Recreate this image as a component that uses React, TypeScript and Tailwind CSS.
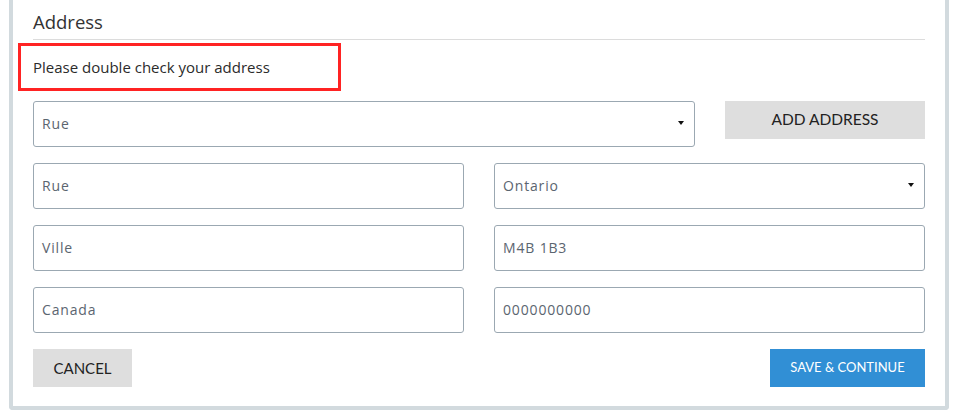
const fieldText = "text-[14px] tracking-[0.06em] text-[#5b6570]";

function Caret() {
  return (
    <svg width="6" height="4" viewBox="0 0 6 4" className="shrink-0">
      <path d="M0 0h6L3 4z" fill="#111" />
    </svg>
  );
}

function Field({ value, select }: { value: string; select?: boolean }) {
  return (
    <div className="h-[46px] flex items-center justify-between rounded-[3px] border border-[#9ba8b2] bg-white pl-2 pr-[10px] pb-[2px]">
      <span className={fieldText} style={{ fontFamily: '"Open Sans", sans-serif' }}>
        {value}
      </span>
      {select && <Caret />}
    </div>
  );
}

function App() {
  return (
    <main className="min-h-screen bg-white pl-[9px] pr-[19px]" style={{ fontFamily: "Lato, sans-serif" }}>
      <div className="border-x-4 border-b-4 border-[#d2dade] rounded-b-[4px] px-5 pb-[19px]">
        <div className="h-10 flex items-center border-b border-[#dcdcdc] pt-[5px]">
          <h2 className="text-[18.5px] text-[#333]" style={{ fontFamily: '"Open Sans", sans-serif' }}>
            Address
          </h2>
        </div>

        <div className="mt-[3px] -ml-[15px] w-[323px] h-[48px] border-[3px] border-[#ff2323] flex items-center pl-3">
          <p className="text-[15px] text-[#2b2b2b]" style={{ fontFamily: '"Open Sans", sans-serif' }}>
            Please double check your address
          </p>
        </div>

        <div className="mt-[10px] flex flex-col gap-4">
          <div className="flex gap-[30px] items-start">
            <div className="flex-1">
              <Field value="Rue" select />
            </div>
            <button className="w-[200px] h-[38px] bg-[#dedede] text-[15.5px] text-[#222]">ADD ADDRESS</button>
          </div>

          <div className="grid grid-cols-2 gap-x-[30px] gap-y-4">
            <Field value="Rue" />
            <Field value="Ontario" select />
            <Field value="Ville" />
            <Field value="M4B 1B3" />
            <Field value="Canada" />
            <Field value="0000000000" />
          </div>

          <div className="flex justify-between">
            <button className="w-[99px] h-[38px] bg-[#dedede] text-[15px] text-[#222]">CANCEL</button>
            <button className="w-[155px] h-[38px] bg-[#318fd5] text-[13px] text-white">SAVE &amp; CONTINUE</button>
          </div>
        </div>
      </div>
    </main>
  );
}

export default App;
